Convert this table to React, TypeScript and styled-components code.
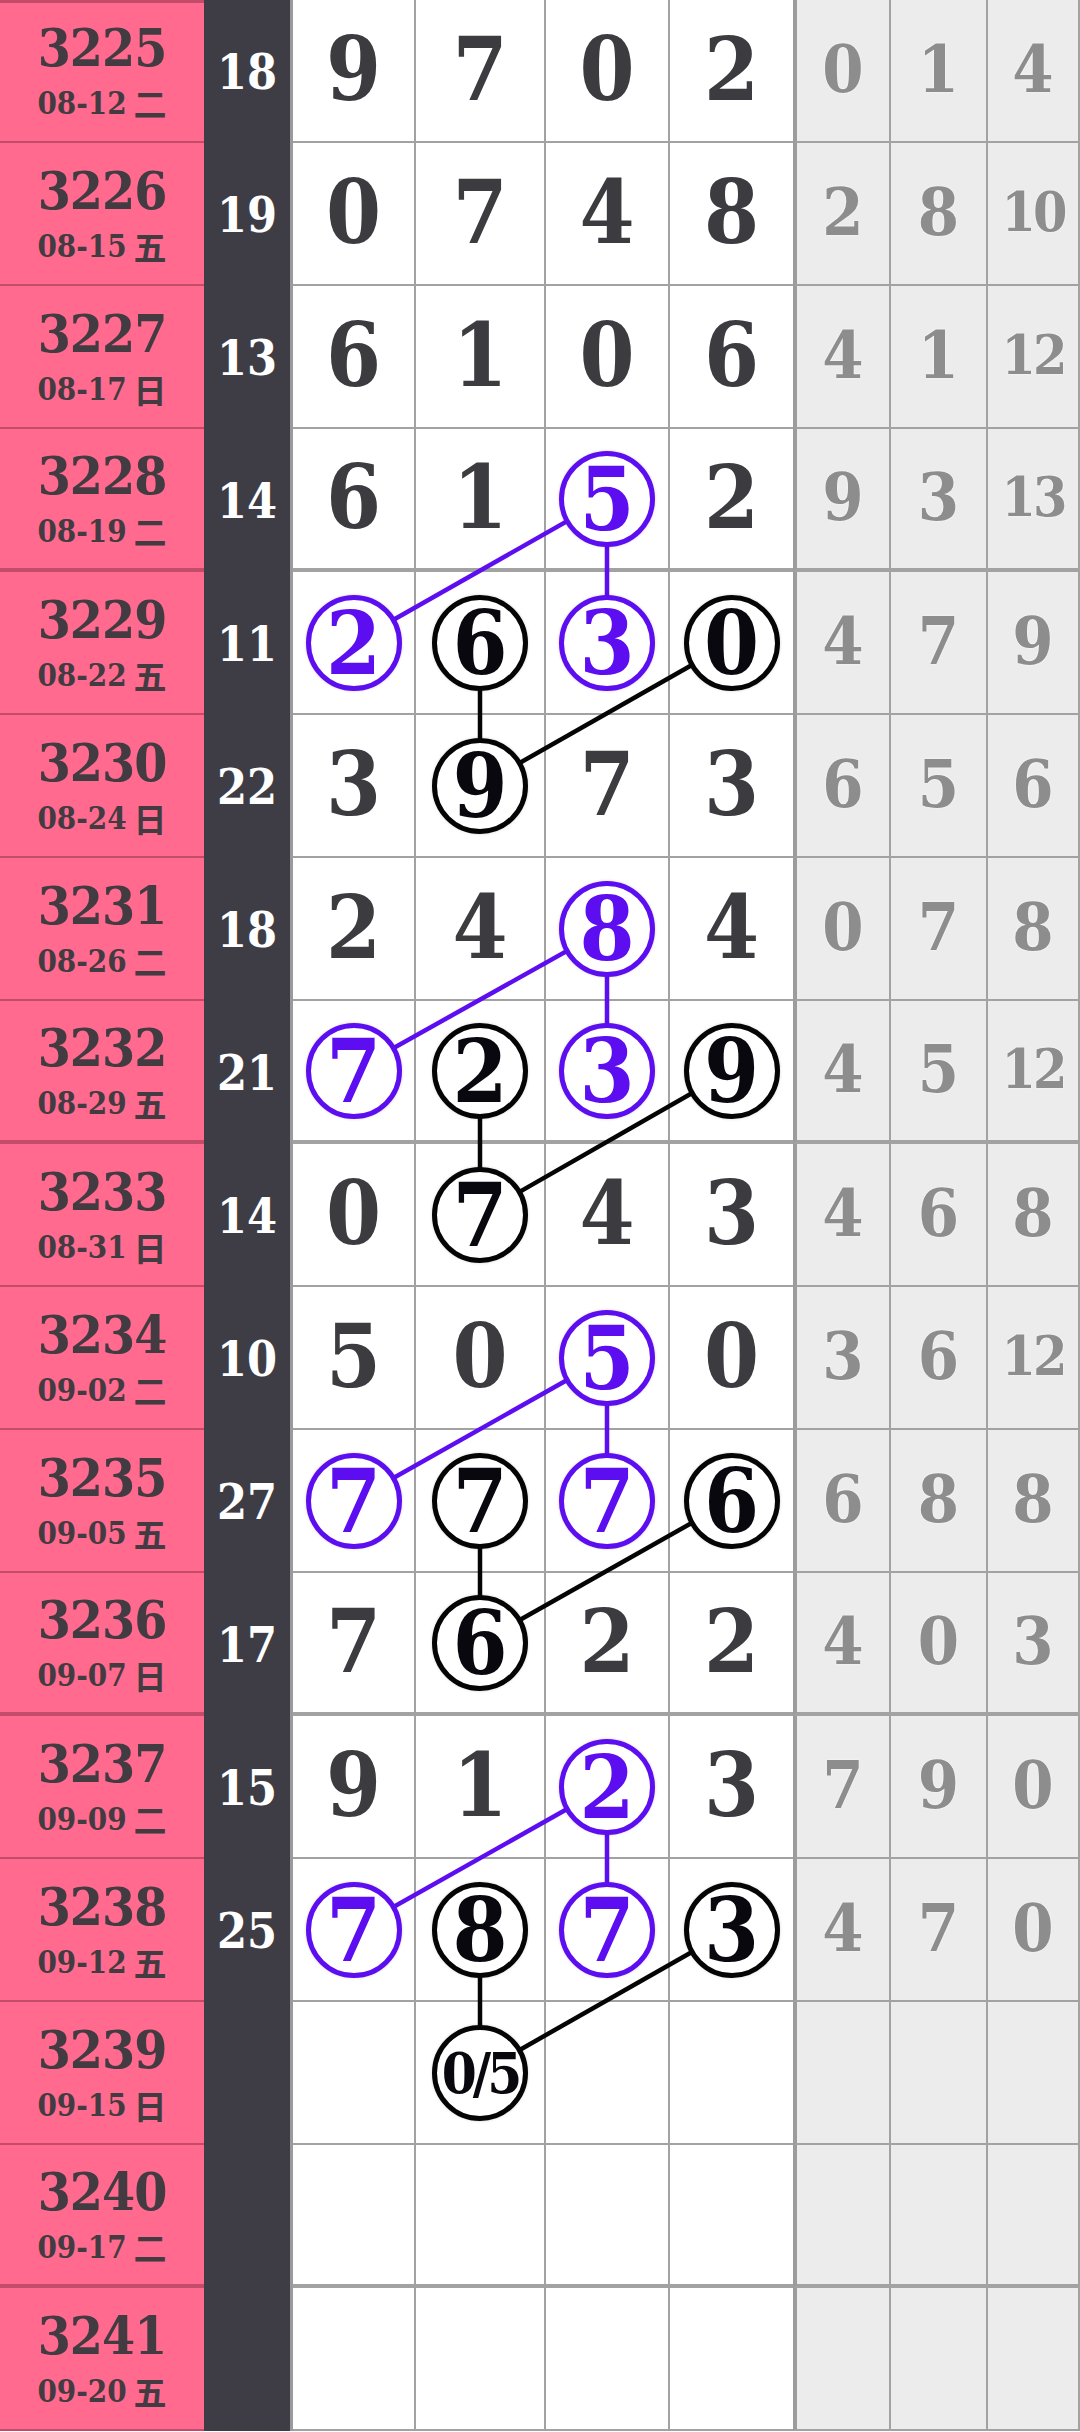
import React from "react";
import styled, { createGlobalStyle } from "styled-components";

type Tone = "p" | "b";

type Draw = {
  no: string;
  date: string;
  day: string;
  sum?: number;
  digits: string[];
  miss: number[];
};

const ROW_H = 143;
const DATE_W = 204;
const SUM_W = 89;
const DIGIT_W = [123, 130, 124, 123];
const MISS_W = [98, 97, 92];
const PURPLE = "#5d0ef0";
const SERIF = `"DejaVu Serif", "Noto Sans CJK SC", serif`;

const draws: Draw[] = [
  { no: "3225", date: "08-12", day: "二", sum: 18, digits: ["9", "7", "0", "2"], miss: [0, 1, 4] },
  { no: "3226", date: "08-15", day: "五", sum: 19, digits: ["0", "7", "4", "8"], miss: [2, 8, 10] },
  { no: "3227", date: "08-17", day: "日", sum: 13, digits: ["6", "1", "0", "6"], miss: [4, 1, 12] },
  { no: "3228", date: "08-19", day: "二", sum: 14, digits: ["6", "1", "5", "2"], miss: [9, 3, 13] },
  { no: "3229", date: "08-22", day: "五", sum: 11, digits: ["2", "6", "3", "0"], miss: [4, 7, 9] },
  { no: "3230", date: "08-24", day: "日", sum: 22, digits: ["3", "9", "7", "3"], miss: [6, 5, 6] },
  { no: "3231", date: "08-26", day: "二", sum: 18, digits: ["2", "4", "8", "4"], miss: [0, 7, 8] },
  { no: "3232", date: "08-29", day: "五", sum: 21, digits: ["7", "2", "3", "9"], miss: [4, 5, 12] },
  { no: "3233", date: "08-31", day: "日", sum: 14, digits: ["0", "7", "4", "3"], miss: [4, 6, 8] },
  { no: "3234", date: "09-02", day: "二", sum: 10, digits: ["5", "0", "5", "0"], miss: [3, 6, 12] },
  { no: "3235", date: "09-05", day: "五", sum: 27, digits: ["7", "7", "7", "6"], miss: [6, 8, 8] },
  { no: "3236", date: "09-07", day: "日", sum: 17, digits: ["7", "6", "2", "2"], miss: [4, 0, 3] },
  { no: "3237", date: "09-09", day: "二", sum: 15, digits: ["9", "1", "2", "3"], miss: [7, 9, 0] },
  { no: "3238", date: "09-12", day: "五", sum: 25, digits: ["7", "8", "7", "3"], miss: [4, 7, 0] },
  { no: "3239", date: "09-15", day: "日", digits: ["", "0/5", "", ""], miss: [] },
  { no: "3240", date: "09-17", day: "二", digits: ["", "", "", ""], miss: [] },
  { no: "3241", date: "09-20", day: "五", digits: ["", "", "", ""], miss: [] },
];

// circled cells and the links between them, one pattern every 3 rows
const marks: Record<string, Tone> = {};
const links: [number, number, number, number, Tone][] = [];
[3, 6, 9, 12].forEach((r) => {
  marks[`${r}-2`] = "p";
  marks[`${r + 1}-0`] = "p";
  marks[`${r + 1}-2`] = "p";
  marks[`${r + 1}-1`] = "b";
  marks[`${r + 1}-3`] = "b";
  marks[`${r + 2}-1`] = "b";
  links.push(
    [r, 2, r + 1, 0, "p"],
    [r, 2, r + 1, 2, "p"],
    [r + 1, 1, r + 2, 1, "b"],
    [r + 1, 3, r + 2, 1, "b"]
  );
});

const isGroupEnd = (i: number) => i % 4 === 3;
const bottomBorder = (i: number) => (isGroupEnd(i) ? 4 : 2);

const colX = (c: number) => {
  const left = DATE_W + SUM_W + DIGIT_W.slice(0, c).reduce((a, b) => a + b, 0);
  return left + (DIGIT_W[c] - (c < 3 ? 2 : 0)) / 2;
};
const rowY = (r: number) => r * ROW_H + (ROW_H - bottomBorder(r)) / 2;

const GlobalStyle = createGlobalStyle`
  html, body {
    margin: 0;
    padding: 0;
    background: #fff;
  }
  body {
    font-family: ${SERIF};
  }
`;

const Page = styled.div`
  position: relative;
  width: 1080px;
  overflow: hidden;
`;

const Row = styled.div`
  display: grid;
  grid-template-columns: ${DATE_W}px ${SUM_W}px ${DIGIT_W.map((w) => `${w}px`).join(" ")} ${MISS_W.map(
      (w) => `${w}px`
    ).join(" ")};
  height: ${ROW_H}px;
`;

const DateCell = styled.div<{ $end: boolean; $first: boolean }>`
  box-sizing: border-box;
  background: #ff6a8e;
  border-bottom: ${(p) => (p.$end ? 4 : 2)}px solid rgba(120, 40, 60, 0.45);
  box-shadow: ${(p) => (p.$first ? "inset 0 3px 0 rgba(120, 40, 60, 0.45)" : "none")};
  display: flex;
  flex-direction: column;
  align-items: center;
  justify-content: center;
  color: #423c42;
  font-weight: 700;
  font-stretch: condensed;
`;

const IssueNo = styled.div`
  font-size: 53px;
  line-height: 1;
  letter-spacing: -1px;
`;

const IssueDate = styled.div`
  font-size: 31px;
  line-height: 1;
  margin-top: 13px;
  display: flex;
  gap: 7px;
  align-items: center;
`;

const DayName = styled.span`
  font-family: "Noto Sans CJK SC", sans-serif;
  font-size: 33px;
  font-weight: 700;
`;

const SumCell = styled.div`
  box-sizing: border-box;
  background: #3e3d46;
  border-right: 3px solid #9a9a9a;
  display: flex;
  align-items: center;
  justify-content: center;
  color: #fff;
  font-size: 48px;
  font-weight: 700;
  font-stretch: condensed;
  line-height: 1;
`;

const DigitCell = styled.div<{ $end: boolean; $last: boolean }>`
  box-sizing: border-box;
  background: #fff;
  border-right: ${(p) => (p.$last ? "none" : "2px solid #a2a2a2")};
  border-bottom: ${(p) => (p.$end ? 4 : 2)}px solid #a2a2a2;
  display: flex;
  align-items: center;
  justify-content: center;
  color: #3b3b40;
  font-size: 88px;
  font-weight: 700;
  font-stretch: condensed;
  line-height: 1;
  padding-bottom: 4px;
`;

const MissCell = styled.div<{ $end: boolean; $first: boolean; $wide: boolean }>`
  box-sizing: border-box;
  background: #ececec;
  border-left: ${(p) => (p.$first ? "4px solid #9c9c9c" : "none")};
  border-right: 2px solid #a2a2a2;
  border-bottom: ${(p) => (p.$end ? 4 : 2)}px solid #a2a2a2;
  display: flex;
  align-items: center;
  justify-content: center;
  color: #8d8d8d;
  font-size: ${(p) => (p.$wide ? 55 : 66)}px;
  letter-spacing: ${(p) => (p.$wide ? -3 : 0)}px;
  font-weight: 700;
  font-stretch: condensed;
  line-height: 1;
  padding-bottom: 4px;
  text-shadow: 0 0 2px #fff;
`;

const Ring = styled.span<{ $tone: Tone; $small: boolean }>`
  position: relative;
  z-index: 2;
  box-sizing: border-box;
  width: 96px;
  height: 96px;
  margin-top: 4px;
  border-radius: 50%;
  border: 5px solid ${(p) => (p.$tone === "p" ? PURPLE : "#050505")};
  background: #fff;
  box-shadow: 0 0 3px rgba(0, 0, 0, 0.18);
  display: flex;
  align-items: center;
  justify-content: center;
  color: ${(p) => (p.$tone === "p" ? PURPLE : "#08080e")};
  font-size: ${(p) => (p.$small ? 56 : 88)}px;
  letter-spacing: ${(p) => (p.$small ? -4 : 0)}px;
`;

const Links = styled.svg`
  position: absolute;
  left: 0;
  top: 0;
  z-index: 1;
  pointer-events: none;
`;

export default function App() {
  const height = draws.length * ROW_H;
  return (
    <Page>
      <GlobalStyle />
      {draws.map((d, i) => (
        <Row key={d.no}>
          <DateCell $end={isGroupEnd(i)} $first={i === 0}>
            <IssueNo>{d.no}</IssueNo>
            <IssueDate>
              <span>{d.date}</span>
              <DayName>{d.day}</DayName>
            </IssueDate>
          </DateCell>
          <SumCell>{d.sum ?? ""}</SumCell>
          {d.digits.map((n, c) => {
            const tone = marks[`${i}-${c}`] ?? (n === "0/5" ? "b" : undefined);
            return (
              <DigitCell key={c} $end={isGroupEnd(i)} $last={c === 3}>
                {tone ? (
                  <Ring $tone={tone} $small={n.length > 1}>
                    {n}
                  </Ring>
                ) : (
                  n
                )}
              </DigitCell>
            );
          })}
          {MISS_W.map((_, k) => {
            const v = d.miss[k];
            const text = v === undefined ? "" : String(v);
            return (
              <MissCell key={k} $end={isGroupEnd(i)} $first={k === 0} $wide={text.length > 1}>
                {text}
              </MissCell>
            );
          })}
        </Row>
      ))}
      <Links width={1080} height={height} viewBox={`0 0 1080 ${height}`}>
        {links.map(([r1, c1, r2, c2, tone], k) => (
          <line
            key={k}
            x1={colX(c1)}
            y1={rowY(r1)}
            x2={colX(c2)}
            y2={rowY(r2)}
            stroke={tone === "p" ? PURPLE : "#050505"}
            strokeWidth={4.5}
          />
        ))}
      </Links>
    </Page>
  );
}
